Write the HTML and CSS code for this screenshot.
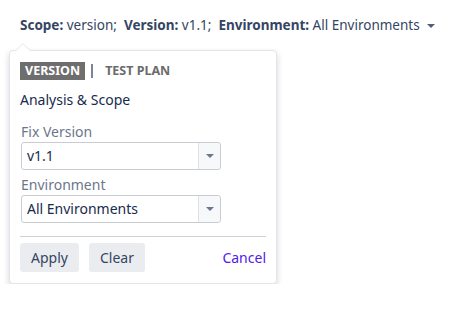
FILE: index.html
```html
<!DOCTYPE html>
<html lang="en">
<head>
    <meta charset="UTF-8">
    <title>Scope</title>
    <link rel="stylesheet" href="styles.css">
</head>
<body>
    <div class="scope-bar">
        <button class="scope-trigger">
            <b>Scope:</b> version;&nbsp; <b>Version:</b> v1.1;&nbsp; <b>Environment:</b> All Environments
            <span class="caret"></span>
        </button>
    </div>

    <!-- scope popup -->
    <div class="popup">
        <div class="tabs">
            <span class="tab active">Version</span>
            <span class="tab-sep"></span>
            <span class="tab">Test Plan</span>
        </div>
        <div class="popup-title">Analysis &amp; Scope</div>

        <label class="field-label">Fix Version</label>
        <div class="select">
            <span class="select-value">v1.1</span>
            <span class="select-arrow"><span class="caret small"></span></span>
        </div>

        <label class="field-label">Environment</label>
        <div class="select">
            <span class="select-value">All Environments</span>
            <span class="select-arrow"><span class="caret small"></span></span>
        </div>

        <div class="popup-footer">
            <button class="btn">Apply</button>
            <button class="btn">Clear</button>
            <a class="link" href="#">Cancel</a>
        </div>
    </div>
</body>
</html>
```

FILE: styles.css
```css
:root {
    --text-dark: #172b4d;
    --text-muted: #6b778c;
    --border: #c9ccd2;
    --btn-bg: #ebecf0;
    --link: #5319e7;
}

body {
    margin: 0;
    padding: 0;
    background: #fff;
    color: var(--text-dark);
    font-family: "Noto Sans", "Open Sans", sans-serif;
    font-size: 14px;
}

.scope-bar {
    padding: 15px 0 0 20px;
}

.scope-trigger {
    border: none;
    background: none;
    padding: 0;
    font: inherit;
    font-size: 13.5px;
    color: #344563;
    cursor: pointer;
}

.scope-trigger b {
    font-weight: 700;
}

.caret {
    display: inline-block;
    width: 0;
    height: 0;
    margin-left: 4px;
    vertical-align: middle;
    border-left: 4px solid transparent;
    border-right: 4px solid transparent;
    border-top: 4px solid #505f79;
}

.caret.small {
    margin: 0;
    border-width: 4px 4px 0;
    border-top-color: #6b778c;
}

/* popup */
.popup {
    position: relative;
    width: 246px;
    margin: 16px 0 0 9px;
    padding: 11px 10px 11px 10px;
    background: #fff;
    border: 1px solid #e4e5e8;
    border-radius: 4px;
    box-shadow: 0 3px 6px rgba(9, 30, 66, 0.18);
}

.popup::before,
.popup::after {
    content: "";
    position: absolute;
    left: 5px;
    top: -8px;
    border-left: 8px solid transparent;
    border-right: 8px solid transparent;
    border-bottom: 8px solid #e4e5e8;
}

.popup::after {
    top: -7px;
    border-bottom-color: #fff;
}

.tabs {
    display: flex;
    align-items: center;
    height: 18px;
    font-size: 12.5px;
    font-weight: 700;
    text-transform: uppercase;
    color: #6b6b6b;
}

.tab {
    padding: 0 4px;
    line-height: 18px;
}

.tab.active {
    padding: 0 5px;
    background: #6e6e6e;
    color: #fff;
}

.tab-sep {
    width: 2px;
    height: 14px;
    margin: 0 8px 0 6px;
    background: #7a869a;
}

.popup-title {
    margin: 10px 0 14px;
    color: var(--text-dark);
}

.field-label {
    display: block;
    margin: 0 0 1px 1px;
    color: var(--text-muted);
    line-height: 18px;
}

.select {
    display: flex;
    width: 198px;
    height: 26px;
    margin: 0 0 6px 1px;
    border: 1px solid var(--border);
    border-radius: 3px;
    background: #fff;
}

.select-value {
    flex: 1;
    padding: 0 5px;
    line-height: 26px;
    color: var(--text-dark);
}

.select-arrow {
    display: flex;
    align-items: center;
    justify-content: center;
    width: 21px;
    border-left: 1px solid #dfe1e6;
    background: #f7f8f9;
    border-radius: 0 3px 3px 0;
}

.popup-footer {
    display: flex;
    align-items: center;
    gap: 10px;
    margin-top: 13px;
    padding-top: 6px;
    border-top: 1px solid #d0d0d0;
}

.btn {
    height: 29px;
    padding: 0 11px;
    border: none;
    border-radius: 3px;
    background: var(--btn-bg);
    color: #344563;
    font: inherit;
    cursor: pointer;
}

.link {
    margin-left: auto;
    color: var(--link);
    text-decoration: none;
}
```
